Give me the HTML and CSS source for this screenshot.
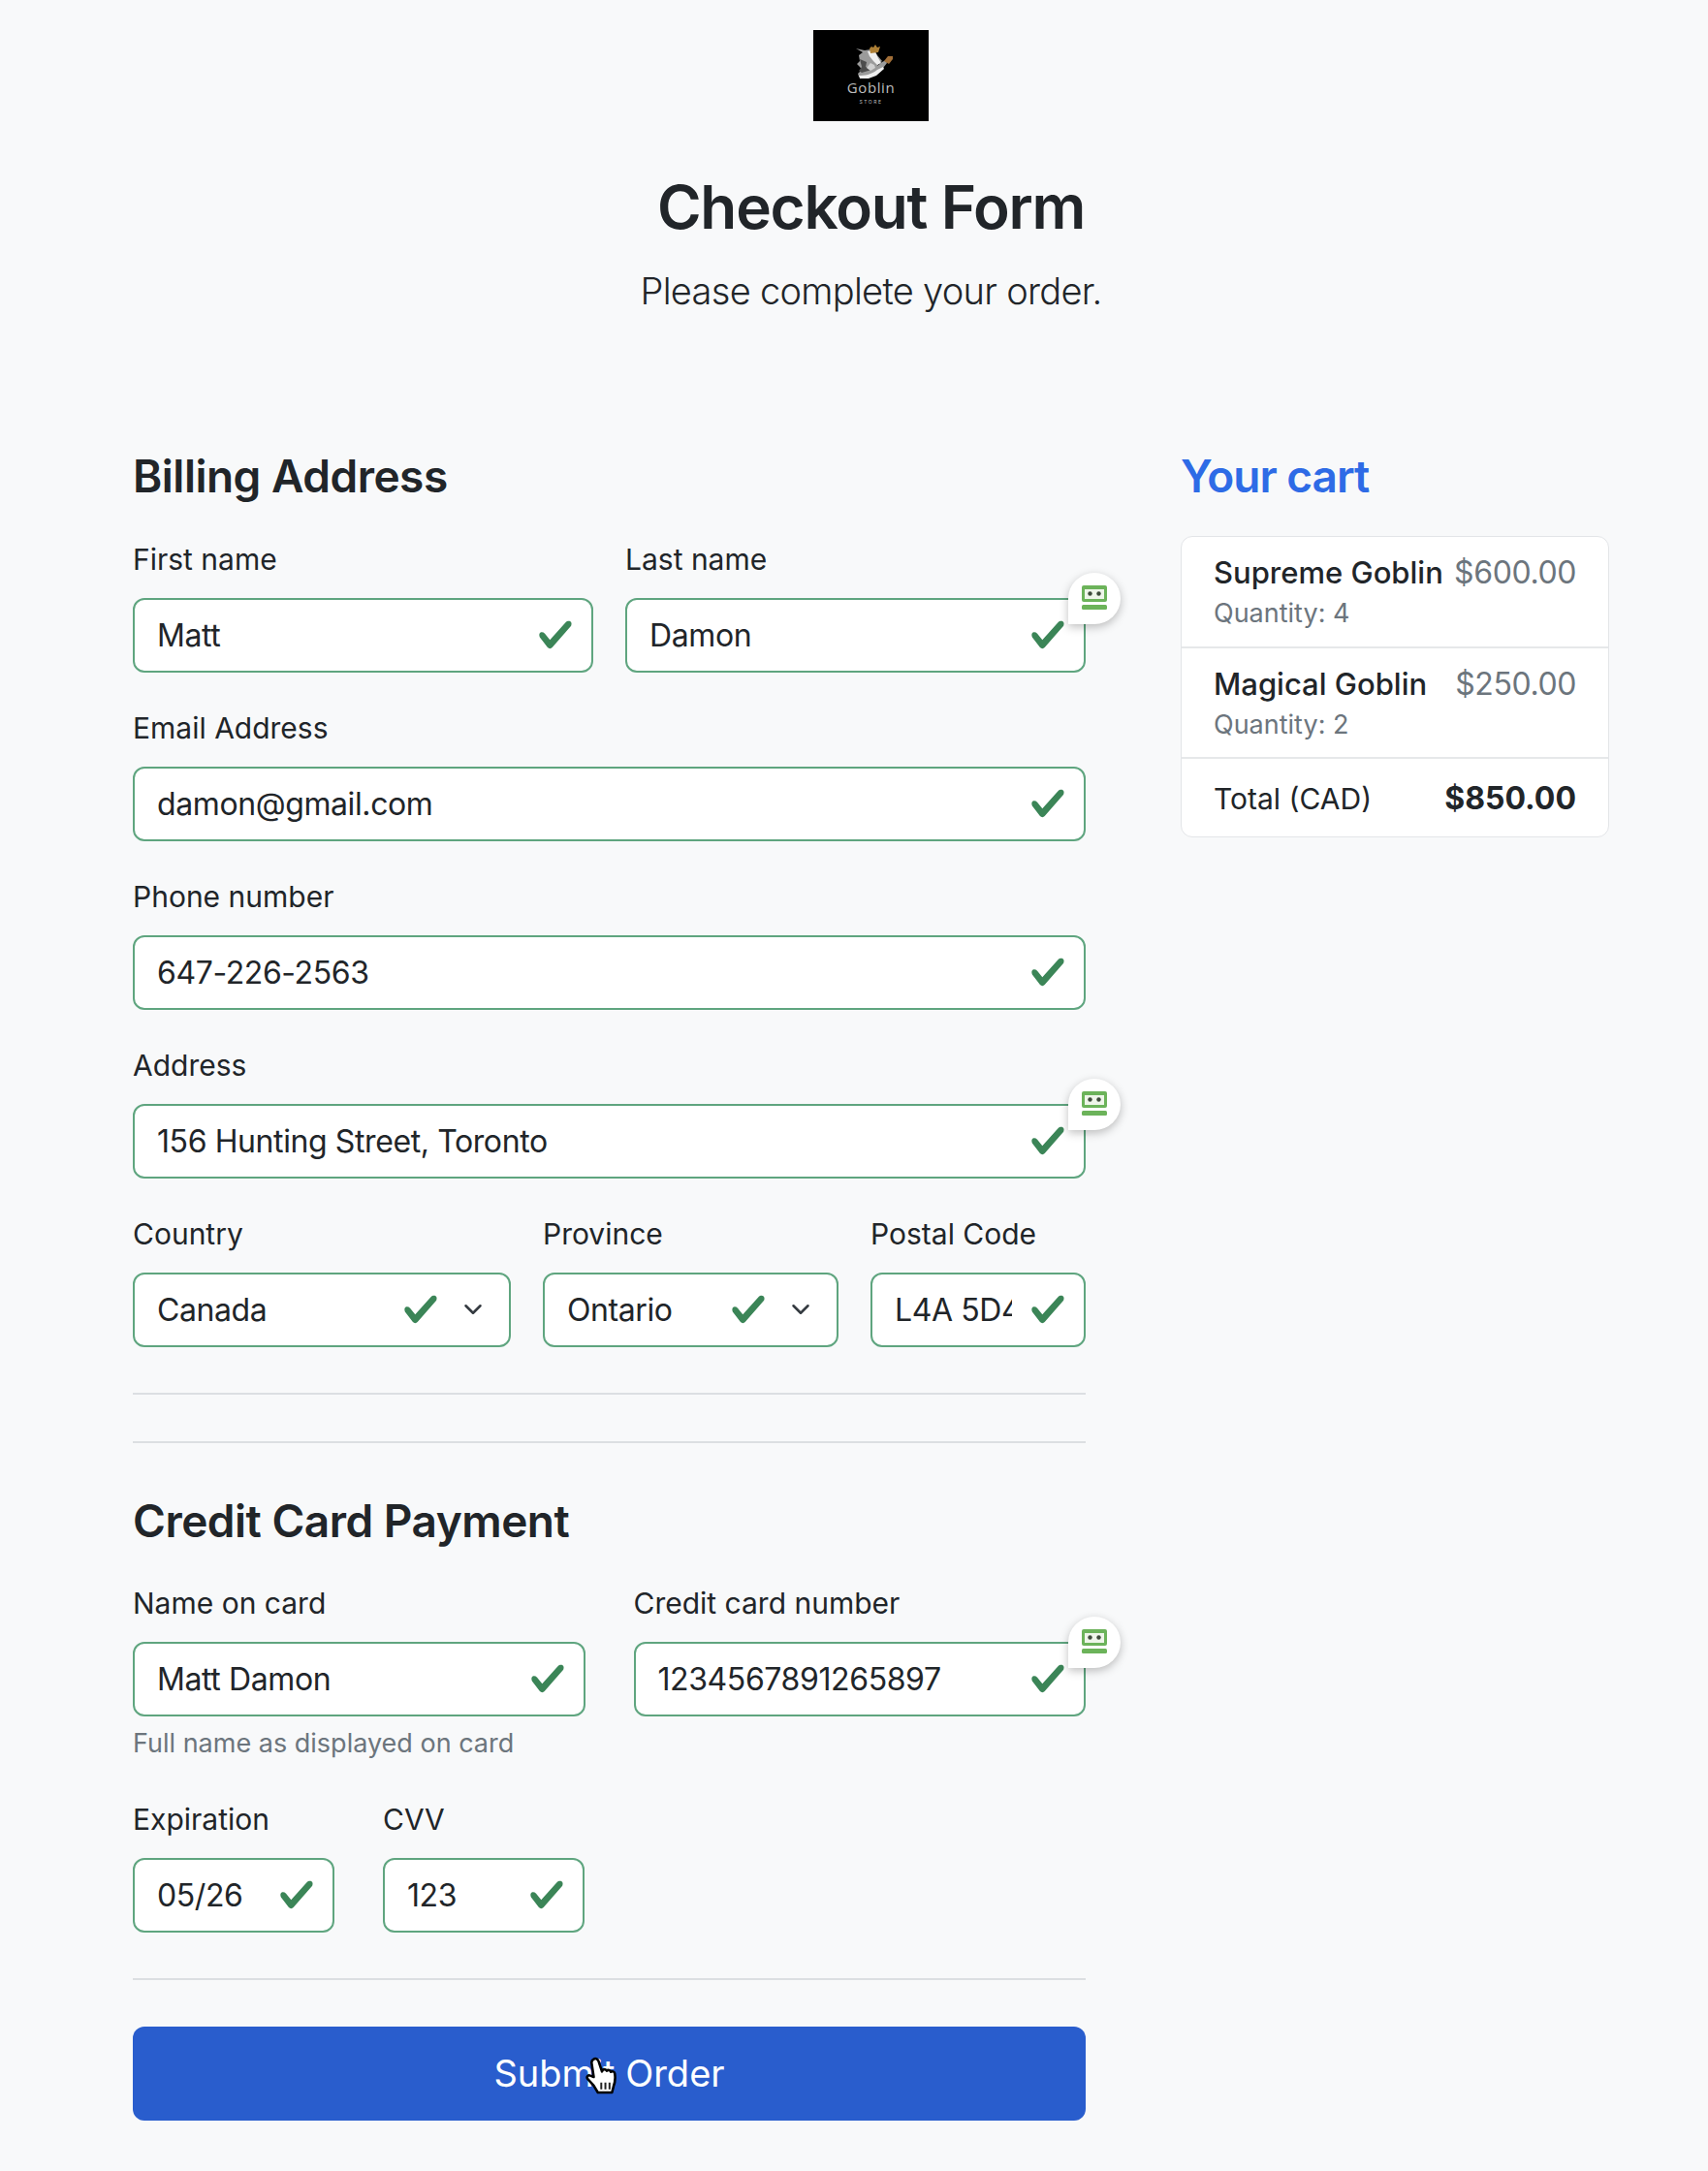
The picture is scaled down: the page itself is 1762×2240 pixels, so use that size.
FILE: index.html
```html
<!DOCTYPE html>
<html lang="en">
<head>
  <meta charset="UTF-8" />
  <meta name="viewport" content="width=device-width, initial-scale=1.0"/>
  <title>Checkout Form</title>
  <link rel="stylesheet" href="styles.css">
</head>
<body>

<svg class="sprites" width="0" height="0" aria-hidden="true">
  <symbol id="check" viewBox="0 0 8 8">
    <path d="M2.3 6.73.6 4.53c-.4-1.04.46-1.4 1.1-.8l1.1 1.4 3.4-3.8c.6-.63 1.6-.27 1.2.7l-4 4.6c-.43.5-.8.4-1.1.1z"/>
  </symbol>
  <symbol id="chevron" viewBox="0 0 16 16">
    <path d="m2 5 6 6 6-6" fill="none" stroke="#343a40" stroke-linecap="round" stroke-linejoin="round" stroke-width="2"/>
  </symbol>
  <symbol id="robot" viewBox="0 0 28 28">
    <rect x="1" y="1" width="26" height="17" rx="2" fill="#6cb35a"/>
    <rect x="4" y="5" width="20" height="10" fill="#eef5e9"/>
    <circle cx="9.5" cy="9.500" r="2.200" fill="#3d4a3a"/>
    <circle cx="18.500" cy="9.500" r="2.200" fill="#3d4a3a"/>
    <rect x="1" y="21" width="26" height="5" rx="1.500" fill="#6cb35a"/>
  </symbol>
</svg>

<div class="container">
  <header class="page-head">
    <div class="logo">
      <svg class="logo-art" viewBox="0 0 38 37" aria-hidden="true">
        <path d="M0 4 9 6l6-1 4 0 3 6 5 6-4 3-1 2 5-4 4-2 1 3-7 9-6 4-8 2-8-1-1-3 4-4-2-3-3-3 3-3-1-6 4-3z" fill="#9b9b9b"/>
        <path d="M4 15l7 3-1 5 6 3-10 3-3-2 3-4z" fill="#4d4d4d"/>
        <path d="M3 32c6 0 13-1 19-6l6-3 1 2-8 7-8 3-9 0z" fill="#efefef"/>
        <path d="M12 7l7-1 4 8 3 5-4 2-4-4-4-5z" fill="#efefef"/>
        <path d="M15 19l4 2 1 3-5 3-4-3z" fill="#d0d0d0"/>
        <path d="M14 4l2-2 2 1 2-3 2 3 3-1-2 6-8 1z" fill="#ad7f35"/>
        <path d="M29 17l4-5h5v3l-4 5z" fill="#a26f38"/>
      </svg>
      <span class="logo-name">Goblin</span>
      <span class="logo-sub">STORE</span>
    </div>
    <h1>Checkout Form</h1>
    <p class="lead">Please complete your order.</p>
  </header>

  <div class="columns">
    <form class="checkout">
      <h2>Billing Address</h2>

      <div class="row cols-6-6">
        <div class="field">
          <label for="first">First name</label>
          <div class="control">
            <input id="first" value="Matt">
            <svg class="check"><use href="#check"/></svg>
          </div>
        </div>
        <div class="field">
          <label for="last">Last name</label>
          <div class="control">
            <input id="last" value="Damon">
            <svg class="check"><use href="#check"/></svg>
            <span class="badge"><svg><use href="#robot"/></svg></span>
          </div>
        </div>
      </div>

      <div class="field">
        <label for="email">Email Address</label>
        <div class="control">
          <input id="email" value="damon@gmail.com">
          <svg class="check"><use href="#check"/></svg>
        </div>
      </div>

      <div class="field">
        <label for="phone">Phone number</label>
        <div class="control">
          <input id="phone" value="647-226-2563">
          <svg class="check"><use href="#check"/></svg>
        </div>
      </div>

      <div class="field">
        <label for="address">Address</label>
        <div class="control">
          <input id="address" value="156 Hunting Street, Toronto">
          <svg class="check"><use href="#check"/></svg>
          <span class="badge"><svg><use href="#robot"/></svg></span>
        </div>
      </div>

      <div class="row cols-5-4-3">
        <div class="field">
          <label for="country">Country</label>
          <div class="control has-chevron">
            <select id="country"><option>Canada</option></select>
            <svg class="check"><use href="#check"/></svg>
            <svg class="chevron"><use href="#chevron"/></svg>
          </div>
        </div>
        <div class="field">
          <label for="province">Province</label>
          <div class="control has-chevron">
            <select id="province"><option>Ontario</option></select>
            <svg class="check"><use href="#check"/></svg>
            <svg class="chevron"><use href="#chevron"/></svg>
          </div>
        </div>
        <div class="field">
          <label for="postal">Postal Code</label>
          <div class="control">
            <input id="postal" value="L4A 5D4">
            <svg class="check"><use href="#check"/></svg>
          </div>
        </div>
      </div>

      <hr class="rule-first">
      <hr class="rule-second">

      <h2>Credit Card Payment</h2>

      <div class="row cols-6-6 wide">
        <div class="field">
          <label for="cardname">Name on card</label>
          <div class="control">
            <input id="cardname" value="Matt Damon">
            <svg class="check"><use href="#check"/></svg>
          </div>
          <small>Full name as displayed on card</small>
        </div>
        <div class="field">
          <label for="cardnum">Credit card number</label>
          <div class="control">
            <input id="cardnum" value="1234567891265897">
            <svg class="check"><use href="#check"/></svg>
            <span class="badge"><svg><use href="#robot"/></svg></span>
          </div>
        </div>
      </div>

      <div class="row cols-3-3 wide">
        <div class="field">
          <label for="exp">Expiration</label>
          <div class="control">
            <input id="exp" value="05/26">
            <svg class="check"><use href="#check"/></svg>
          </div>
        </div>
        <div class="field">
          <label for="cvv">CVV</label>
          <div class="control">
            <input id="cvv" value="123">
            <svg class="check"><use href="#check"/></svg>
          </div>
        </div>
      </div>

      <hr class="rule-last">

      <button class="submit" type="button">
        Submit Order
        <svg class="cursor" viewBox="0 0 24 30" aria-hidden="true">
          <path d="M6 2c1.500-1 3 0 3.500 1.500L12 11l.5-1c1-1 2.500-.5 3 .5.800-1 2.500-.5 3 .8.800-.8 2.500-.3 2.800 1 .5 3 .2 7-1 10l-1 4H9l-3-5-4.500-5c-1-1.500.5-3 2-2.300L6 15 4.500 5C4.300 3.800 5 2.500 6 2z" fill="#fff" stroke="#000" stroke-width="1.800" stroke-linejoin="round"/>
          <path d="M11.500 19v5M14.500 19v5M17.500 19v5" stroke="#222" stroke-width="1.400"/>
        </svg>
      </button>
    </form>

    <aside class="cart">
      <h2 class="cart-title">Your cart</h2>
      <ul class="cart-list">
        <li>
          <div>
            <h3>Supreme Goblin</h3>
            <small>Quantity: 4</small>
          </div>
          <span class="price">$600.00</span>
        </li>
        <li>
          <div>
            <h3>Magical Goblin</h3>
            <small>Quantity: 2</small>
          </div>
          <span class="price">$250.00</span>
        </li>
        <li class="total">
          <span>Total (CAD)</span>
          <strong>$850.00</strong>
        </li>
      </ul>
    </aside>
  </div>
</div>

</body>
</html>
```

FILE: styles.css
```css
* {
  box-sizing: border-box;
  margin: 0;
  padding: 0;
}

body {
  font-family: Inter, "Liberation Sans", sans-serif;
  font-size: 32px;
  line-height: 1.5;
  color: #212529;
  background: #f8f9fa;
}

.sprites {
  position: absolute;
}

.container {
  padding: 31px 102px 0 137px;
}

/* header */
.page-head {
  display: flex;
  flex-direction: column;
  align-items: center;
  text-align: center;
}

.logo {
  width: 119px;
  height: 94px;
  background: #000;
  color: #bdbdbd;
  display: flex;
  flex-direction: column;
  align-items: center;
  padding-top: 15px;
  line-height: 1;
}

.logo-art {
  width: 38px;
  height: 37px;
  margin-left: 6px;
}

.logo-name {
  font-family: "Open Sans", sans-serif;
  font-size: 15px;
  letter-spacing: 0.6px;
}

.logo-sub {
  font-size: 5px;
  letter-spacing: 1.5px;
  margin-top: 5px;
}

h1 {
  font-size: 62px;
  font-weight: 600;
  line-height: 1.2;
  letter-spacing: -1.2px;
  margin-top: 52px;
}

.lead {
  font-size: 38px;
  font-weight: 300;
  line-height: 1.5;
  letter-spacing: -0.7px;
  margin-top: 21px;
}

/* columns */
.columns {
  display: grid;
  grid-template-columns: 983px 442px;
  gap: 98px;
  margin-top: 135px;
}

h2 {
  font-size: 46px;
  font-weight: 600;
  line-height: 1.2;
  letter-spacing: -0.5px;
  margin-bottom: 35px;
}

/* form */
.row {
  display: grid;
  gap: 33px;
}

.cols-6-6 {
  grid-template-columns: 1fr 1fr;
}

.cols-5-4-3 {
  grid-template-columns: 390px 305px 1fr;
}

.cols-3-3 {
  grid-template-columns: 208px 208px;
}

.row.wide {
  gap: 50px;
}

.field {
  min-width: 0;
  margin-bottom: 35px;
}

label {
  display: block;
  font-size: 30px;
  line-height: 44px;
  margin-bottom: 18px;
}

.control {
  position: relative;
  display: flex;
  align-items: center;
  height: 77px;
  padding-right: 18px;
  background: #fff;
  border: 2px solid #5fa57f;
  border-radius: 12px;
}

.has-chevron {
  padding-right: 27px;
}

.control input,
.control select {
  flex: 1;
  width: 100%;
  min-width: 0;
  height: 100%;
  padding-left: 23px;
  border: 0;
  outline: 0;
  background: transparent;
  font-family: inherit;
  font-size: 32px;
  letter-spacing: -0.4px;
  color: #212529;
  appearance: none;
}

.check {
  flex: none;
  width: 38px;
  height: 38px;
  margin-left: 18px;
  fill: #3b8557;
}

.chevron {
  flex: none;
  width: 20px;
  height: 20px;
  margin-left: 25px;
}

.badge {
  position: absolute;
  top: -28px;
  right: -38px;
  width: 54px;
  height: 53px;
  display: flex;
  align-items: center;
  justify-content: center;
  background: #fff;
  border-radius: 50% 50% 50% 0;
  box-shadow: 0 3px 10px rgba(0, 0, 0, 0.25);
}

.badge svg {
  width: 28px;
  height: 28px;
}

small {
  display: block;
  font-size: 27px;
  color: #6c757d;
}

.field small {
  line-height: 42px;
  margin-top: 7px;
}

hr {
  border: 0;
  border-top: 2px solid #dcdfe2;
}

.rule-first {
  margin-top: 12px;
}

.rule-second {
  margin-top: 48px;
  margin-bottom: 53px;
}

.rule-last {
  margin-top: 12px;
  margin-bottom: 48px;
}

.submit {
  position: relative;
  display: block;
  width: 100%;
  height: 97px;
  border: 0;
  border-radius: 12px;
  background: #295dcd;
  color: #fff;
  font-family: inherit;
  font-size: 38px;
}

.cursor {
  position: absolute;
  left: 467px;
  top: 30px;
  width: 34px;
  height: 44px;
}

/* cart */
.cart-title {
  color: #2e6be6;
  letter-spacing: -1px;
  margin-bottom: 33px;
}

.cart-list {
  list-style: none;
  background: #fff;
  border: 1px solid #e3e5e8;
  border-radius: 12px;
}

.cart-list li {
  display: flex;
  justify-content: space-between;
  padding: 15px 33px 13px;
  border-bottom: 2px solid #e6e8ea;
}

.cart-list li:first-child {
  padding-bottom: 14px;
}

.cart-list li:last-child {
  border-bottom: 0;
}

.cart-list h3 {
  font-size: 31px;
  font-weight: 500;
  line-height: 44px;
}

.cart-list small {
  line-height: 40px;
}

.price {
  font-size: 32px;
  line-height: 44px;
  letter-spacing: -0.4px;
  color: #6c757d;
}

.cart-list .total {
  align-items: center;
  padding: 18px 33px 16px;
  font-size: 30px;
  line-height: 46px;
}

.total strong {
  font-size: 32px;
  font-weight: 700;
}
```
